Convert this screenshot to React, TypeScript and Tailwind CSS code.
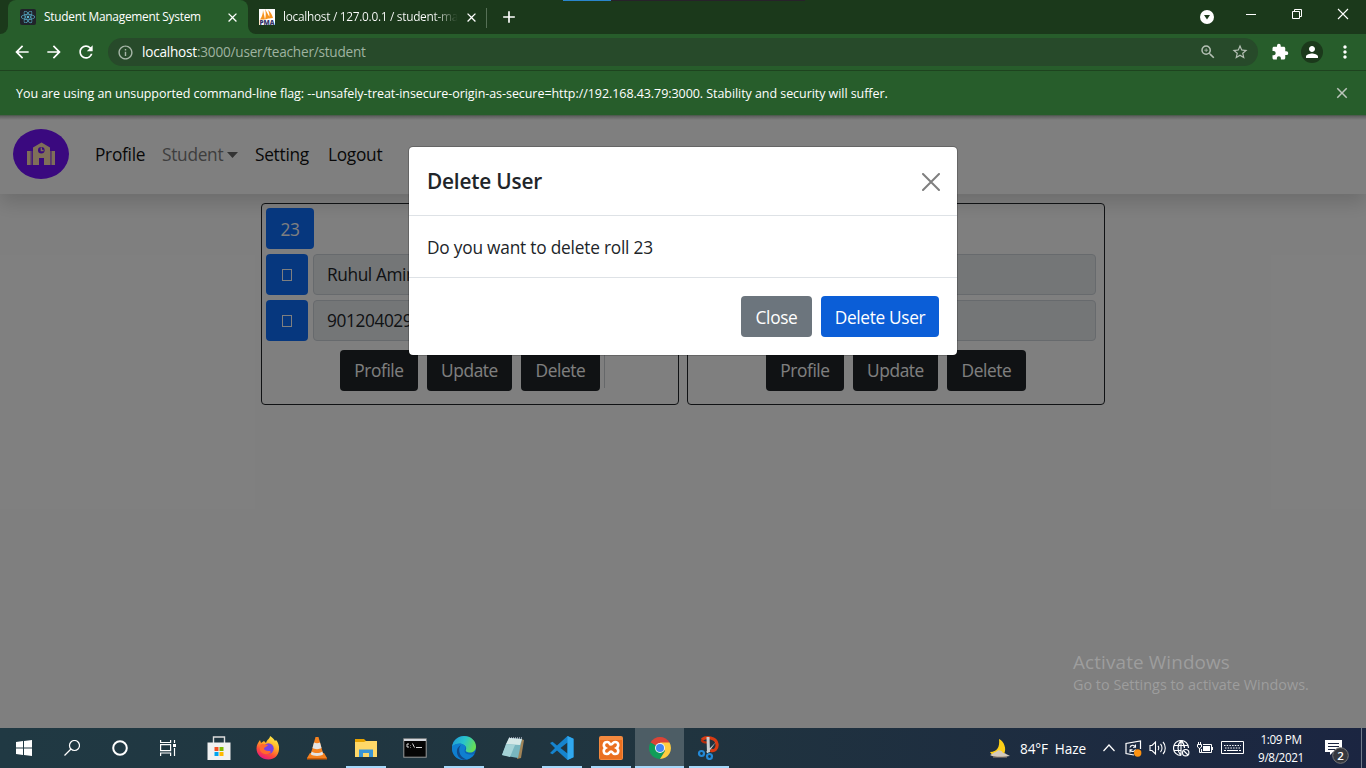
import React from "react";
import { FaReact } from "react-icons/fa";
import {
  MdArrowBack, MdArrowForward, MdRefresh, MdExtension, MdPerson, MdMoreVert,
  MdStarBorder, MdInfoOutline, MdZoomIn, MdClose, MdAdd,
} from "react-icons/md";

function TabStrip() {
  return (
    <div className="relative flex h-[34px] items-stretch bg-[#1b391b] text-white">
      <div className="absolute left-[563px] top-0 flex h-px w-[242px] bg-[#27222a]">
        <div className="w-12 bg-[#2a86cc]" />
      </div>
      <div className="flex w-2 items-end bg-[#275d2b]">
        <div className="h-full w-2 rounded-br-lg bg-[#1b391b]" />
      </div>
      <div className="flex w-[240px] items-center rounded-t-lg bg-[#275d2b] pl-3">
        <span className="flex size-4 items-center justify-center rounded-[2px] bg-[#20232a]">
          <FaReact className="size-3.5 text-[#5ab4d0]" />
        </span>
        <span className="ml-2 w-[181px] whitespace-nowrap text-[11.9px] tracking-[-0.26px]">Student Management System</span>
        <MdClose className="size-[15px] shrink-0" />
      </div>
      <div className="flex w-[238px] items-center bg-[#275d2b]">
        <div className="flex h-full w-full items-center rounded-bl-lg bg-[#1b391b] pl-[11px]">
          <svg viewBox="0 0 16 16" className="size-4 shrink-0 overflow-visible">
            <rect width="16" height="16" fill="#fff" />
            <path d="M1 10.5C3 8 4 4 4 1l2 9.5zM6 10.5C7 7 7 3 6 0l5 9zM10 9.5C11 6 10 3 9 1c3 2 4 5 5 8z" fill="#f7941e" />
            <text x=".5" y="15.6" fontSize="6" fontWeight="800" textLength="15" lengthAdjust="spacingAndGlyphs" fill="#35356b">PMA</text>
          </svg>
          <span className="ml-2 w-[175px] whitespace-nowrap bg-gradient-to-r from-white from-86% to-[#1b391b] bg-clip-text text-[11.9px] tracking-[-0.3px] text-transparent">localhost / 127.0.0.1 / student-ma</span>
          <MdClose className="ml-[6px] size-[15px] shrink-0" />
        </div>
      </div>
      <div className="mt-2 h-5 w-px bg-[#567056]" />
      <MdAdd className="ml-3 mt-[7px] size-5" />
      <div className="ml-auto mr-[17px] flex pt-2">
        <svg viewBox="0 0 14 14" className="mr-[31px] mt-[2px] size-3.5"><circle cx="7" cy="7" r="7" fill="#fff" /><path d="M4 5h6L7 9.5z" fill="#1b391b" /></svg>
        <svg viewBox="0 0 12 12" className="mr-[34px] size-3" fill="none" stroke="#fff"><path d="M1 6.5h10" /></svg>
        <svg viewBox="0 0 12 12" className="mr-[34px] size-3" fill="none" stroke="#fff"><path d="M1.5 3.5h7v7h-7zM3.5 3V1.5h7v7H9" /></svg>
        <svg viewBox="0 0 12 12" className="size-3" fill="none" stroke="#fff" strokeWidth="1.1"><path d="m1 1 10 10M11 1 1 11" /></svg>
      </div>
    </div>
  );
}

function Toolbar() {
  return (
    <div className="flex h-[37px] items-center border-b border-[#1e431f] bg-[#275d2b] text-white">
      <MdArrowBack className="ml-3 size-5" />
      <MdArrowForward className="ml-3 size-5" />
      <MdRefresh className="ml-3 size-5" />
      <div className="ml-3 flex h-7 w-[1150px] items-center rounded-full bg-[#274a2a] pl-[9px] text-[13.6px] tracking-[-0.22px] text-[#9fb3a0]">
        <MdInfoOutline className="mr-2 size-[17px] text-[#a7b6a8]" />
        <span className="pt-px"><span className="text-white">localhost</span>:3000/user/teacher/student</span>
        <MdZoomIn className="ml-auto size-[18px] text-[#b5c0b5]" />
        <MdStarBorder className="ml-[14px] mr-[9px] size-[18px] text-[#b5c0b5]" />
      </div>
      <MdExtension className="ml-[13px] size-[18px]" />
      <span className="ml-3 flex size-[22px] items-center justify-center rounded-full bg-[#1b391b]"><MdPerson className="size-[18px]" /></span>
      <MdMoreVert className="ml-3 size-5" />
    </div>
  );
}

function Logo() {
  return (
    <svg viewBox="0 0 56 50" className="mb-[2px] h-[50px] w-14 shrink-0">
      <rect width="56" height="50" rx="28" ry="25" fill="#7412ff" />
      <path d="M20 36V18.5L28.5 13.5 37 18.5V36H31v-7h-5v7zM14 22h3.700v14H14zM38.500 22H42v14h-3.500z" fill="#ffdfb3" />
      <path d="M18.800 22v14M37.700 22v14" stroke="#ffdfb3" strokeWidth=".6" />
      <circle cx="28.300" cy="21.300" r="3.300" fill="#7412ff" />
      <path d="M28.300 18.500v3h2.300" fill="none" stroke="#ffdfb3" strokeWidth="1.300" />
    </svg>
  );
}

function StudentCard({ roll, name, phone, line }: { roll?: string; name?: string; phone?: string; line?: boolean }) {
  const square = "flex h-[41px] w-[42px] shrink-0 items-center justify-center rounded-[4px] bg-[#0d6efd]";
  const field = "ml-[5px] mr-1 flex h-[41px] flex-1 items-center rounded-[4px] border border-[#ced4da] bg-[#e9ecef] px-[13px] pt-px whitespace-nowrap";
  const dark = "flex h-[41px] items-center justify-center rounded-[4px] bg-[#212529] pt-px text-white";
  return (
    <div className="flex h-[202px] w-[418px] flex-col rounded-[4px] border border-[#212529] p-1 text-[17.3px] tracking-[-0.4px] text-[#212529]">
      <div className="flex h-[46px]">
        <div className="flex h-[41px] w-12 items-center justify-center rounded-[4px] bg-[#0d6efd] pt-[2px] text-white">{roll}</div>
      </div>
      <div className="flex h-[46px]">
        <div className={square}><span className="mt-px h-3 w-2.5 border border-white" /></div>
        <div className={field}>{name}</div>
      </div>
      <div className="flex h-[50px]">
        <div className={square}><span className="mt-px h-3 w-2.5 border border-white" /></div>
        <div className={field}>{phone}</div>
      </div>
      <div className="flex justify-center gap-[9px]">
        <div className={dark + " w-[78px]"}>Profile</div>
        <div className={dark + " w-[85px]"}>Update</div>
        <div className="relative flex">
          <div className={dark + " w-[79px]"}>Delete</div>
          {line && <span className="absolute left-[83px] top-1 h-[34px] w-px bg-[#ccd0d4]" />}
        </div>
      </div>
    </div>
  );
}

function Modal() {
  return (
    <div className="flex h-[210px] w-[550px] flex-col rounded-[5px] border border-black/20 bg-white bg-clip-padding text-[17.300px] tracking-[-0.35px] text-[#212529]">
      <div className="flex h-[69px] items-center justify-between border-b border-[#dee2e6] pl-[18px] pr-[17px]">
        <span className="pt-[2px] text-[20.800px] font-semibold tracking-[-0.2px]">Delete User</span>
        <svg viewBox="0 0 18 18" className="mt-px size-[18px]" fill="none" stroke="#7f7f7f" strokeWidth="2" strokeLinecap="round"><path d="m1 1 16 16M17 1 1 17" /></svg>
      </div>
      <div className="flex h-[62px] items-center border-b border-[#dee2e6] px-[18px] pt-[2px] tracking-[-0.21px]">Do you want to delete roll 23</div>
      <div className="flex flex-1 items-center justify-end gap-[9px] pr-[18px] text-white">
        <div className="flex h-[41px] w-[71px] items-center justify-center rounded-[4px] bg-[#6c757d] pt-[2px]">Close</div>
        <div className="flex h-[41px] w-[118px] items-center justify-center rounded-[4px] bg-[#0b5ed7] pt-[2px]">Delete User</div>
      </div>
    </div>
  );
}

function Page() {
  return (
    <div className="relative h-[612px] overflow-hidden bg-white">
      <div className="flex h-[78px] items-center bg-white pl-[13px] text-[17.300px] tracking-[-0.280px] text-[#111] shadow-[0_9px_18px_rgba(0,0,0,0.15)]">
        <Logo />
        <span className="ml-[26px] w-[67px]">Profile</span>
        <span className="flex w-[93px] items-center text-[#7c7c7c]">Student<svg viewBox="0 0 11 6" className="ml-1 h-1.5 w-[11px]"><path d="M0 0h11L5.500 6z" fill="#666" /></svg></span>
        <span className="w-[73px]">Setting</span>
        <span>Logout</span>
      </div>
      <div className="flex justify-center gap-2 pt-[9px]">
        <StudentCard roll="23" name="Ruhul Amin" phone="9012040293" line />
        <StudentCard />
      </div>
      <div className="absolute inset-0 flex items-start justify-center bg-black/50 pt-[30px]"><Modal /></div>
      <div className="absolute inset-x-0 top-0 h-1 bg-gradient-to-b from-black/25 to-transparent" />
      <div className="absolute left-[1073px] top-[534px] whitespace-nowrap text-[#9d9d9d]">
        <div className="text-[18.900px] leading-[25px] tracking-[0.120px]">Activate Windows</div>
        <div className="text-[14.400px] leading-5">Go to Settings to activate Windows.</div>
      </div>
    </div>
  );
}

const apps: { icon: React.ReactNode; state: string }[] = [
  { state: "", icon: <svg viewBox="0 0 24 24" className="size-6"><path d="M6.5 7V1h11v6" fill="none" stroke="#ddd" strokeWidth="1.4" /><path d="M.5 6.5h23V24H.5z" fill="#f1f1f1" /><path d="M7.5 11h4v4h-4z" fill="#f25022" /><path d="M12.5 11h4v4h-4z" fill="#7fba00" /><path d="M7.5 16h4v4h-4z" fill="#00a4ef" /><path d="M12.5 16h4v4h-4z" fill="#ffb900" /></svg> },
  { state: "", icon: <svg viewBox="0 0 24 24" className="size-6"><defs><linearGradient id="ff" x1=".8" y1="0" x2=".3" y2="1"><stop stopColor="#fff44f" /><stop offset=".4" stopColor="#ffae25" /><stop offset=".72" stopColor="#ff4b38" /><stop offset="1" stopColor="#e31587" /></linearGradient></defs><path d="M4 4 5 7l3-2 2 2c1-4 4-4 4-7 2 1 4 3 5 5l1-1c2 2 3.5 6 3 9.500C22.500 20 18 23.500 12.500 23.500 6 23.500.5 19 .5 12.500.5 9 2 7 4 4z" fill="url(#ff)" /><circle cx="12.5" cy="12.500" r="5.200" fill="#7542e5" /><path d="M4 9c3-2 5 0 8 0-1 2-4 2-4 4 2 3 6 1 7 3-4 4-10 2-11-2z" fill="#ff692e" /></svg> },
  { state: "", icon: <svg viewBox="0 0 24 24" className="size-6"><path d="M5 17h14l3 5v1H2v-1z" fill="#f58220" /><path d="M10.500 1h3l5 18c-3 2-10 2-13 0z" fill="#f58220" /><path d="m9 6.500-1.500 5.500c2 1.500 7 1.500 9 0L15 6.500c-2 1-4 1-6 0zM6.700 15.500l-.9 2.800c2 2.200 10.400 2.200 12.400 0l-.9-2.800c-3 2-7.600 2-10.600 0z" fill="#e4e4e4" /><path d="M2 22h20v1.500H2z" fill="#ce5d08" /></svg> },
  { state: "open", icon: <svg viewBox="0 0 24 24" className="size-6"><path d="M1 3h9l2 2h11v16H1z" fill="#e6a200" /><path d="M1 6h9l2-1h11v16H1z" fill="#ffd868" /><path d="M5 13.500h14V21h-4v-4H9v4H5z" fill="#3a95d5" /></svg> },
  { state: "", icon: <svg viewBox="0 0 24 24" className="size-6"><rect x=".8" y="2.800" width="22.400" height="18.400" fill="#050505" stroke="#9b9b9b" /><path d="M1 4h22" stroke="#d4d7dc" strokeWidth="2" /><path d="M6 8H4v3h2m1.500-2v.5m0 1.500v.5m2-4 2 4m1.500 0h6" fill="none" stroke="#d9d9d9" strokeWidth="1" /></svg> },
  { state: "open", icon: <svg viewBox="0 0 24 24" className="size-6"><defs><linearGradient id="eg" y1=".2" y2=".5"><stop stopColor="#219bd6" /><stop offset=".5" stopColor="#29c4cb" /><stop offset="1" stopColor="#68df53" /></linearGradient></defs><circle cx="12" cy="12" r="12" fill="#0b65b8" /><path d="M0 11C1 4 6 0 12 0c7 0 12 5 12 10.500 0 4-3 6-6 6-3 0-5-1-4-3C16 8 5 5 0 11z" fill="url(#eg)" /><path d="M0 11c5-6 14-3 13.500 1-2 3-1 6.500 6 6.500 2 0 3-.7 3-.4C17 27 2 26 0 14z" fill="#0f7fd0" /><path d="M9 9c-3 3-3 12 6 14.500C10 25 4 21 5 14c.3-2 2-4 4-5z" fill="#114a8b" /></svg> },
  { state: "", icon: <svg viewBox="0 0 24 24" className="size-6"><path d="m20 3 3 1-3 18-4 1z" fill="#a18457" /><path d="m8 2 13 1-4 19-16-3z" fill="#78b6bf" /><path d="m8 2 13 1-2 6L5 8z" fill="#d5e8e7" /><path d="m5 8 9 1-5 12-8-2z" fill="#a4d2d6" /><path d="M8 2h13" stroke="#eef" strokeDasharray="1" /></svg> },
  { state: "open", icon: <svg viewBox="0 0 24 24" className="size-6"><path fillRule="evenodd" d="m17.500 0 6 2.700v18.600l-6 2.700L7 14.500l-4.500 3.700L0 17l5-5-5-5 2.500-1.200L7 9.500zM17.500 6.500 10.500 12l7 5.500z" fill="#1684ce" /><path d="m17.500 0 6 2.700v18.600l-6 2.700z" fill="#30a8ef" /></svg> },
  { state: "open", icon: <svg viewBox="0 0 24 24" className="size-6"><rect width="24" height="24" rx="2" fill="#f3893f" /><path d="M1 4h22v19H1z" fill="#ea7020" /><path d="M8.500 6C4 6 4 10.500 6.500 12c-2.500 1.500-2.500 6 1.500 6 2.500 0 2-2.500 4-2.500s1.500 2.500 4 2.500c4 0 4-4.500 1.500-6 2.500-1.500 2.500-6-1.500-6-2.500 0-2 2.500-4 2.500S11 6 8.500 6z" fill="none" stroke="#fff" strokeWidth="2.600" /></svg> },
  { state: "active", icon: <svg viewBox="0 0 24 24" className="size-6"><path d="M12 12 2.500 6.500A11 11 0 0 1 21.500 6.500z" fill="#db4437" /><path d="M12 12 2.500 6.500A11 11 0 0 0 12 23l5-8z" fill="#0f9d58" /><path d="M12 6.500h9.500A11 11 0 0 1 12 23l5-8z" fill="#ffcd40" /><circle cx="12" cy="12" r="5" fill="#f4f4f4" /><circle cx="12" cy="12" r="4" fill="#4285f4" /></svg> },
  { state: "open", icon: <svg viewBox="0 0 24 24" className="size-6"><path d="M5 3.500C9 .5 19 1 20 8c.7 5-3 8-6.500 6" fill="none" stroke="#d83b13" strokeWidth="3.200" /><path d="M5 3.500c-1 2 2 3 5 3" fill="none" stroke="#b92c0b" strokeWidth="2" /><path d="m9.500 1 3 0 .5 15-3 1zM19 6l-8 11-2-1z" fill="#c9ced1" /><circle cx="4.500" cy="17.500" r="2.500" fill="none" stroke="#2389d7" strokeWidth="2.200" /><circle cx="12.500" cy="20.500" r="2.500" fill="none" stroke="#2389d7" strokeWidth="2.200" /></svg> },
];

function Taskbar() {
  return (
    <div className="flex h-10 items-stretch bg-gradient-to-r from-[#203943] via-[#20343f] to-[#1b2541] text-white">
      <div className="flex w-[194px] items-center">
        <svg viewBox="0 0 16 16" className="ml-4 size-4" fill="#fff"><path d="m0 2 7-1v6.500H0zM8 .9 16 0v7.500H8zM0 8.500h7V15l-7-1zM8 8.500h8V16l-8-1z" /></svg>
        <svg viewBox="0 0 16 16" className="ml-8 size-4" fill="none" stroke="#fff" strokeWidth="1.200"><circle cx="10.500" cy="5.500" r="5" /><path d="m7 9-6.500 6.500" /></svg>
        <svg viewBox="0 0 16 16" className="ml-8 size-4" fill="none" stroke="#fff" strokeWidth="2"><circle cx="8" cy="8" r="6.800" /></svg>
        <svg viewBox="0 0 16 16" className="ml-8 size-4" fill="none" stroke="#fff" strokeWidth="1.200"><path d="M.6 0v2.500h10V0M.6 16v-3h10v3M.6 4.700h10v6H.6zM14.500 0v3m0 5v8" /><path d="M13 4h3v3h-3z" fill="#fff" stroke="none" /></svg>
      </div>
      {apps.map((app, i) => (
        <div key={i} className={app.state === "active" ? "flex w-[49px] flex-col items-center bg-[#4d5d65] pt-2" : "flex w-[49px] flex-col items-center pt-2"}>
          {app.icon}
          {app.state && <span className={app.state === "active" ? "mt-auto h-0.5 w-full bg-[#a6d8fa]" : "mt-auto h-0.5 w-10 bg-[#a6d8fa]"} />}
        </div>
      ))}
      <div className="ml-auto flex items-center">
        <svg viewBox="0 0 22 20" className="mr-px h-5 w-[22px]"><path d="M11 1c5 2 8 10 5 15-5 4-12 2-14-2C9 14 12 9 11 1z" fill="#fdcf17" /><path d="M2 17c3-1 4-3 6-3 2-3 6-2 7 1 3 0 4 2 7 3-5 1-15 2-20-1z" fill="#d4cbbd" /><path d="M5 19h14" stroke="#a58e78" /></svg>
        <span className="ml-[9px] w-[83px] whitespace-pre pt-[2px] text-[13.600px] tracking-[-0.100px]">84°F  Haze</span>
        <svg viewBox="0 0 12 8" className="h-2 w-3" fill="none" stroke="#fff" strokeWidth="1.200"><path d="m.5 7 5.500-6 5.500 6" /></svg>
        <svg viewBox="0 0 17 17" className="ml-[10px] size-[17px]" fill="none" stroke="#fff" strokeWidth="1.200"><path d="M15.500 9V1L1 3.500v10l8 1.500" /><path d="M5 7.500c.5-2.500 4-3 5.200-.7M10.500 4.500v2.700H8M10.500 9.500c-1 2.500-4 2.700-5.200.7M5 12.500V9.800h2.500" strokeWidth="1.100" /><circle cx="12.700" cy="13" r="3.700" fill="#ff9412" stroke="none" /></svg>
        <svg viewBox="0 0 17 16" className="ml-[7px] h-4 w-[17px]" fill="none" stroke="#fff" strokeWidth="1.100"><path d="M1 5.500h2L6.500 2v12L3 10.500H1zM9 6c1 1 1 3 0 4M11.500 4c2 2 2 6 0 8M14 2c3 3 3 9 0 12" /></svg>
        <svg viewBox="0 0 17 17" className="ml-[7px] size-[17px]" fill="none" stroke="#fff" strokeWidth="1.150"><path d="M8 15.500A7.500 7.500 0 1 1 15.500 8M8 15.500C4 11 4 5 8 .5c2.500 2.500 3.500 5 3.500 7.500M1 5.500h14M1 10.500h7.500M8 .5v15" /><circle cx="12.700" cy="12.700" r="3.200" /><path d="m10.500 10.500 4.500 4.500" /></svg>
        <svg viewBox="0 0 16 14" className="ml-[7px] h-3.5 w-4" fill="none" stroke="#fff"><path d="M.5 3.500h4V6L2.500 7.500.5 6zM1.500 1v2M3.500 1v2M2.500 7v4.500h2M6 3.500h8.500v8h-10V8M15.500 6v3" /><path d="M6 5h7v5H6z" fill="#fff" stroke="none" /></svg>
        <svg viewBox="0 0 23 14" className="ml-2 h-3.5 w-[23px]" fill="none" stroke="#fff"><path d="M.5.5h22v12H.5z" /><path d="M3 4.500h17M4 7h16" strokeDasharray="1.500 1.200" /><path d="M3 9.500h2m1 0h11m1 0h2" /></svg>
        <div className="ml-3 w-[50px] whitespace-nowrap text-center text-[11.700px] leading-[18px] tracking-[-0.350px]"><div>1:09 PM</div><div>9/8/2021</div></div>
        <svg viewBox="0 0 26 26" className="ml-[18px] mt-1.5 size-[26px]"><path d="M1 2h17v12H9l-3 3v-3H1z" fill="#fff" /><path d="M4 5.500h11M4 8.500h11M4 11.500h7" stroke="#1b2541" /><circle cx="16.500" cy="17.500" r="7.800" fill="#36383e" stroke="#777" /><text x="16.500" y="21.500" textAnchor="middle" fontSize="11.500" fontWeight="600" fill="#fff">2</text></svg>
        <div className="ml-[11px] mr-1 h-10 w-px bg-[#707b8a]" />
      </div>
    </div>
  );
}

export default function App() {
  return (
    <div className="flex h-[768px] w-[1366px] flex-col overflow-hidden bg-[#808080] font-['Open_Sans','Noto_Sans',sans-serif]">
      <TabStrip />
      <Toolbar />
      <div className="flex h-[45px] items-center justify-between border-b border-[#4f5b50] bg-[#275d2b] pl-4 pr-[15px] text-[12.500px] tracking-[-0.060px] text-white">
        <span className="whitespace-nowrap pt-[2px]">You are using an unsupported command-line flag: --unsafely-treat-insecure-origin-as-secure=http://192.168.43.79:3000. Stability and security will suffer.</span>
        <MdClose className="size-[18px] text-[#bcc5bc]" />
      </div>
      <Page />
      <Taskbar />
    </div>
  );
}
